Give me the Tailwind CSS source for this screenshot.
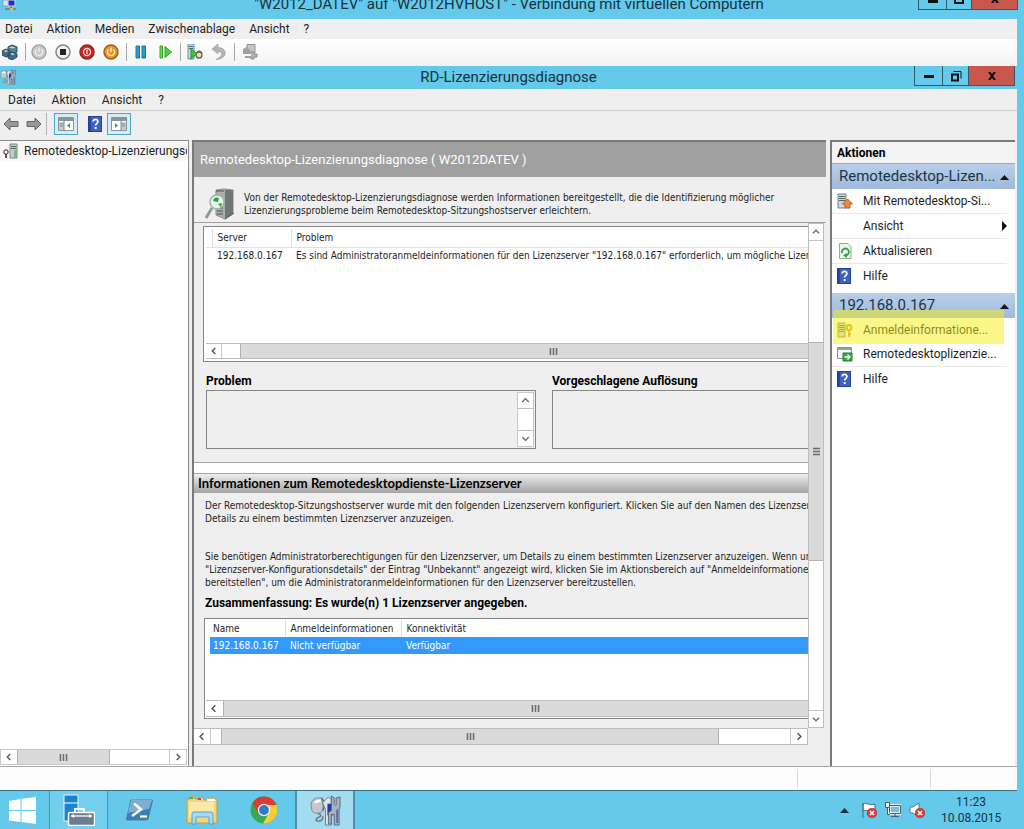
<!DOCTYPE html>
<html lang="de">
<head>
    <meta charset="UTF-8">
    <meta name="viewport" content="width=device-width, initial-scale=1.0">
    <title>RD-Lizenzierungsdiagnose</title>
    <script src="https://cdn.jsdelivr.net/npm/@tailwindcss/browser@4"></script>
</head>
<body class="flex flex-col h-screen overflow-hidden bg-[#64c9ea] text-[#1e1e1e] text-xs font-[Roboto,'Open_Sans',sans-serif]">

    <!-- Shared icons -->
    <svg class="hidden">
        <symbol id="chev-left" viewBox="0 0 16 16"><path d="M9.5 4.5L6 8l3.5 3.5" fill="none" stroke="#555" stroke-width="1.6"/></symbol>
        <symbol id="chev-right" viewBox="0 0 16 16"><path d="M6.5 4.5L10 8l-3.5 3.5" fill="none" stroke="#555" stroke-width="1.6"/></symbol>
        <symbol id="chev-up" viewBox="0 0 16 16"><path d="M4.5 9.5L8 6l3.5 3.5" fill="none" stroke="#666" stroke-width="1.5"/></symbol>
        <symbol id="chev-down" viewBox="0 0 16 16"><path d="M4.5 6.5L8 10l3.5-3.5" fill="none" stroke="#666" stroke-width="1.5"/></symbol>
        <symbol id="grip" viewBox="0 0 9 8"><path d="M1 0v8M4.5 0v8M8 0v8" stroke="#6a6a6a" stroke-width="1.7"/></symbol>
        <symbol id="help" viewBox="0 0 14 16">
            <rect x=".5" y=".5" width="13" height="15" fill="#3d62c4" stroke="#27408f"/>
            <path d="M1 1h2v14H1z" fill="#2a479c"/>
            <path d="M5.2 5.6c0-3 4.7-3 4.7-.2 0 2-2.3 2-2.3 4.2" fill="none" stroke="#fff" stroke-width="1.7"/>
            <rect x="6.7" y="11" width="1.9" height="2" fill="#fff"/>
        </symbol>
        <symbol id="tools" viewBox="0 0 32 32">
            <path d="M1 10c0-5 5-8 11-7l2 12c-2 5-10 5-12 1z" fill="#c3c9cc" stroke="#7d878d"/>
            <path d="M12 3c3 3 4 9 1 13" fill="none" stroke="#5f6a70" stroke-width="1.5"/>
            <path d="M5 8c2-2 4-2 6-2" stroke="#fff" stroke-width="2.5" fill="none"/>
            <path d="M8 19c4 1 4 3 1 4s-4 4 0 4c3 0 5-2 4-5" fill="none" stroke="#6e7a82" stroke-width="1.6"/>
            <path d="M13 8l6-6 3 3v26h-6V15z" fill="#dfe4e9" stroke="#727e88"/>
            <path d="M18 9h6v12h-6z" fill="#2335a8"/>
            <path d="M22 1l3 2v7l1 1 1-1V3l4-1v10l-1 3v16h-5V20h-3v10h-3V18l3-2z" fill="#a8b2bd" stroke="#596875"/>
            <path d="M28 15v14" stroke="#4c62ad" stroke-width="1.6"/>
        </symbol>
        <symbol id="close" viewBox="0 0 12 12"><path d="M2 2h2.5L6 4.3 7.5 2H10L7.3 6l2.7 4H7.5L6 7.7 4.5 10H2l2.7-4z" fill="#111"/></symbol>
        <symbol id="restore" viewBox="0 0 12 12"><path d="M2 4.5h6v6H2z" fill="none" stroke="#111" stroke-width="2"/><path d="M3.5 1.5H11v7" fill="none" stroke="#111"/></symbol>
        <symbol id="badge-x" viewBox="0 0 9 9"><circle cx="4.5" cy="4.5" r="4.3" fill="#d9423f" stroke="#a52222" stroke-width=".5"/><path d="M2.7 2.7l3.6 3.6M6.3 2.7L2.7 6.3" stroke="#fff" stroke-width="1.3"/></symbol>
    </svg>

    <!-- Virtual machine connection: title bar -->
    <header class="grid grid-cols-[1fr_auto_1fr] items-start h-[19px] shrink-0 pr-[6px]">
        <svg class="w-4 h-[10px] ml-0.5" viewBox="0 0 16 10">
            <path d="M1 0h5v6H1z" fill="#dce4ea" stroke="#7d8b96" stroke-width=".7"/><path d="M6 0h7v6H6z" fill="#1c2ed0" stroke="#d8e2ee"/>
            <path d="M9 6v2M3 9h11" stroke="#8c7a33" stroke-width="1.5"/><path d="M8 8h3v2H8z" fill="#d8c35a"/>
        </svg>
        <h1 class="text-[15px] leading-[8px] whitespace-nowrap text-[#17323c]">"W2012_DATEV" auf "W2012HVHOST" - Verbindung mit virtuellen Computern</h1>
        <div class="flex justify-self-end h-[10px] border border-t-0 border-[#315a68]">
            <button aria-label="Minimieren" class="w-7 flex justify-center border-r border-[#315a68]"><span class="w-[10px] h-[3px] bg-[#111]"></span></button>
            <button aria-label="Verkleinern" class="w-[25px] flex justify-center border-r border-[#315a68]"><span class="w-[10px] h-[4px] border-2 border-t-0 border-[#111]"></span></button>
            <button aria-label="Schließen" class="w-[45px] flex justify-center items-start overflow-hidden bg-[#c9574d]"><svg class="w-3 h-3 -mt-[7px]"><use href="#close"/></svg></button>
        </div>
    </header>

    <div class="flex flex-col flex-1 min-h-0 mr-[7px]">
        <nav class="flex items-center gap-[14px] h-5 shrink-0 pl-[5px] bg-[#efefef]">
            <button>Datei</button>
            <button>Aktion</button>
            <button>Medien</button>
            <button>Zwischenablage</button>
            <button>Ansicht</button>
            <button>?</button>
        </nav>

        <!-- Virtual machine toolbar -->
        <div class="flex items-center h-[27px] shrink-0 pl-0.5 pb-0.5 bg-linear-to-b from-white to-[#f3f3f3]">
            <button aria-label="Strg+Alt+Entf"><svg class="w-4 h-4" viewBox="0 0 16 16">
                <path d="M6 3l4-2 5 2v5l-4 2-5-2z" fill="#5b8196" stroke="#274a5d"/><path d="M0 7l4-2 4 2v4l-4 2-4-2zM6 10l4-2 5 2v3l-5 3-4-2z" fill="#426b82" stroke="#274a5d"/>
                <path d="M7 3.5l3-1 3 1-2 1zM2 7l2-1 2 1-2 1zM8 10l2-1 3 1-2 1z" fill="#c3e4f2"/>
            </svg></button>
            <span class="w-px h-[18px] ml-[7px] mr-[5px] bg-[#a9a9a9]"></span>
            <div class="flex gap-2">
                <button aria-label="Starten"><svg class="w-4 h-4" viewBox="0 0 16 16"><circle cx="8" cy="8" r="7" fill="#cacaca" stroke="#a6a6a6" stroke-width="1.5"/><path d="M5.5 5.5a3.5 3.5 0 1 0 5 0M8 3.5V8" fill="none" stroke="#efefef" stroke-width="1.3"/></svg></button>
                <button aria-label="Ausschalten"><svg class="w-4 h-4" viewBox="0 0 16 16"><circle cx="8" cy="8" r="7" fill="#f1f1f1" stroke="#858585" stroke-width="1.5"/><path d="M5 5h6v6H5z" fill="#222"/></svg></button>
                <button aria-label="Herunterfahren"><svg class="w-4 h-4" viewBox="0 0 16 16"><circle cx="8" cy="8" r="7" fill="#cf2421" stroke="#8d2b29" stroke-width="1.5"/><circle cx="8" cy="8" r="3.5" fill="none" stroke="#ffdcd9" stroke-width="1.3"/><path d="M8 6v4" stroke="#ffdcd9" stroke-width="1.3"/></svg></button>
                <button aria-label="Speichern"><svg class="w-4 h-4" viewBox="0 0 16 16"><circle cx="8" cy="8" r="7" fill="#e6941b" stroke="#9b6420" stroke-width="1.5"/><path d="M5.5 5.5a3.5 3.5 0 1 0 5 0M8 3.5V8" fill="none" stroke="#fff3d5" stroke-width="1.3"/></svg></button>
            </div>
            <span class="w-px h-[18px] ml-[7px] mr-2 bg-[#a9a9a9]"></span>
            <button aria-label="Anhalten"><svg class="w-[12px] h-[14px]" viewBox="0 0 12 14"><path d="M1 1h3.5v12H1zM7 1h3.5v12H7z" fill="#2f9bd6" stroke="#27709a"/></svg></button>
            <button aria-label="Zurücksetzen" class="ml-3"><svg class="w-[14px] h-[14px]" viewBox="0 0 14 14"><path d="M1 1h2.5v12H1z" fill="#71d55b" stroke="#37a42a"/><path d="M6 1.5l6.5 5.5L6 12.5z" fill="#52ce3c" stroke="#37a42a"/></svg></button>
            <span class="w-px h-[18px] ml-[7px] mr-[6px] bg-[#a9a9a9]"></span>
            <button aria-label="Prüfpunkt"><svg class="w-4 h-4" viewBox="0 0 16 16"><path d="M1 0h6v15H1z" fill="#c5d9e4" stroke="#6990a8"/><path d="M2 2.5h4M2 4.5h4" stroke="#3b718f"/><circle cx="12" cy="11" r="3" fill="#e7dcd4" stroke="#715b50" stroke-width="1.3"/><path d="M10 8c2-2 4-1 5 1" stroke="#444" fill="none"/><path d="M4 5l6 4.5L4 15z" fill="#3fc735" stroke="#2c922a"/></svg></button>
            <button aria-label="Wiederherstellen" class="ml-2"><svg class="w-4 h-4" viewBox="0 0 16 16"><path d="M1 5l6-5v3.5c10 0 10 11.5-2 12 7-3 7-8 2-8V10z" fill="#b5b5b5" stroke="#999" stroke-width=".6"/></svg></button>
            <span class="w-px h-[18px] mx-[7px] bg-[#a9a9a9]"></span>
            <button aria-label="Erweiterte Sitzung"><svg class="w-4 h-4" viewBox="0 0 16 16"><path d="M5 .5h8v8H5z" fill="#c4c4c4" stroke="#929292"/><path d="M1 5l4-2 3 3 1 4H1zM3 12h8v2H3z" fill="#a0a0a0"/><path d="M9 8h3v2h3v3h-3v2H9v-2" fill="#b2b2b2" stroke="#8d8d8d"/></svg></button>
        </div>

        <!-- Remote session: title bar -->
        <div class="grid grid-cols-[1fr_auto_1fr] h-[23px] shrink-0 bg-[#64c9ea]">
            <svg class="w-4 h-4 mt-[3px]"><use href="#tools"/></svg>
            <h2 class="text-[15px] leading-[22px] text-[#17323c]">RD-Lizenzierungsdiagnose</h2>
            <div class="flex justify-self-end h-5 mr-0.5 border border-t-0 border-[#315a68]">
                <button aria-label="Minimieren" class="w-7 flex justify-center pt-[9px] border-r border-[#315a68]"><span class="w-[10px] h-[3px] bg-[#111]"></span></button>
                <button aria-label="Verkleinern" class="w-[26px] flex justify-center items-center border-r border-[#315a68]"><svg class="w-3 h-3"><use href="#restore"/></svg></button>
                <button aria-label="Schließen" class="w-[45px] flex justify-center items-center bg-[#c9574d]"><svg class="w-3 h-3"><use href="#close"/></svg></button>
            </div>
        </div>
        <nav class="flex items-center gap-4 h-[22px] shrink-0 pl-2 bg-[#efefef] border-b border-[#d0d0d0]">
            <button>Datei</button>
            <button>Aktion</button>
            <button>Ansicht</button>
            <button>?</button>
        </nav>
        <div class="flex items-center h-[29px] shrink-0 pl-[3px] pb-1 bg-[#efefef]">
            <button aria-label="Zurück"><svg class="w-4 h-[14px]" viewBox="0 0 16 14"><path d="M1 7l6-6v3.5h8v5H7V13z" fill="#999" stroke="#666"/></svg></button>
            <button aria-label="Vorwärts" class="ml-[7px]"><svg class="w-4 h-[14px]" viewBox="0 0 16 14"><path d="M15 7L9 1v3.5H1v5h8V13z" fill="#999" stroke="#666"/></svg></button>
            <span class="w-px h-[22px] ml-1 mr-[7px] bg-[#b5b5b5]"></span>
            <button aria-label="Konsolenstruktur" class="flex items-center justify-center w-6 h-[22px] bg-[#d7edf6] border border-[#4ba9cf]"><svg class="w-4 h-[14px]" viewBox="0 0 16 14"><path d="M.5.5h15v13H.5z" fill="#fff" stroke="#8b9298"/><path d="M1 1h14v3H1z" fill="#8b9298"/><path d="M1 5h5v8H1z" fill="#c7cdd2"/><path d="M6 4v10M2 7h3M2 9h3" stroke="#7e868c"/><path d="M12 6v5L9 8.5z" fill="#36a92e"/></svg></button>
            <button aria-label="Hilfe" class="ml-[10px]"><svg class="w-[14px] h-4"><use href="#help"/></svg></button>
            <button aria-label="Aktionsbereich" class="flex items-center justify-center w-6 h-[22px] ml-[5px] bg-[#d7edf6] border border-[#4ba9cf]"><svg class="w-4 h-[14px]" viewBox="0 0 16 14"><path d="M.5.5h15v13H.5z" fill="#fff" stroke="#8b9298"/><path d="M1 1h14v3H1z" fill="#8b9298"/><path d="M10 5h5v8h-5z" fill="#c7cdd2"/><path d="M10 4v10M11 7h3M11 9h3" stroke="#7e868c"/><path d="M4 6v5l3-2.5z" fill="#36a92e"/></svg></button>
        </div>

        <main class="flex flex-1 min-h-0 bg-[#efefef] border-b border-[#a8a8a8]">
            <!-- Console tree -->
            <section class="flex flex-col w-[189px] shrink-0 bg-white border-t border-r border-[#8a8a8a]">
                <button class="flex items-center h-5 pl-[3px] mr-px text-left whitespace-nowrap overflow-hidden bg-[#f7f7f7]">
                    <svg class="w-[15px] h-4 shrink-0 mr-1.5" viewBox="0 0 15 16"><path d="M7 1h7v14H7z" fill="#c6ccce" stroke="#7b8488"/><path d="M8 3.5h5M8 5.5h5" stroke="#596368"/><path d="M11 7h3v8h-3z" fill="#86ad91"/><circle cx="3" cy="9" r="2.2" fill="#fff" stroke="#222"/><path d="M3 11v4" stroke="#222" stroke-width="1.5"/></svg>
                    <span>Remotedesktop-Lizenzierungsdiagnose</span>
                </button>
                <div class="flex h-4 mt-auto mb-px mr-px border border-[#c6c6c6]">
                    <button aria-label="Nach links" class="w-4"><svg class="w-4 h-[14px]"><use href="#chev-left"/></svg></button>
                    <div class="flex items-center justify-center w-[93px] bg-[#dadada] border-x border-[#b2b2b2]"><svg class="w-[9px] h-[7px]"><use href="#grip"/></svg></div>
                    <button aria-label="Nach rechts" class="w-[17px] ml-auto border-l border-[#c6c6c6]"><svg class="w-4 h-[14px]"><use href="#chev-right"/></svg></button>
                </div>
            </section>

            <!-- Diagnosis details -->
            <section class="flex flex-col flex-1 min-w-0 ml-[3px] border-l-2 border-t-2 border-[#7a7a7a]">
                <h3 class="h-[35px] shrink-0 pl-1.5 leading-9 text-[13px] text-white bg-[#a0a0a0]">Remotedesktop-Lizenzierungsdiagnose ( W2012DATEV )</h3>
                <div class="flex items-center h-[46px] shrink-0 pt-2 pl-[11px] border-b border-[#a0a0a0] font-['DejaVu_Sans_Condensed','Liberation_Sans',sans-serif] text-[10px] leading-[13px]">
                    <svg class="w-[30px] h-8 mr-[9px] shrink-0" viewBox="0 0 30 32">
                        <path d="M11 2l8-1 9 1v24l-8 5-9-4z" fill="#a9b0ae" stroke="#858b8b"/><path d="M20 2h8v24l-8 5z" fill="#6f7775"/><path d="M11 3h8M12 20h6M12 23h6M12 26h6" stroke="#4c5551"/>
                        <path d="M7 20L1 30" stroke="#8e9a9c" stroke-width="3"/><circle cx="12" cy="14" r="7" fill="#e8f5ea" stroke="#a4b0ac" stroke-width="1.5"/><path d="M8 13a4 4 0 0 1 6-3l-1 4zM13 16l4-1-1 4z" fill="#2e9e40"/>
                        <path d="M20 31l9-6" stroke="#505050" stroke-dasharray="2 1"/>
                    </svg>
                    <p class="whitespace-nowrap">Von der Remotedesktop-Lizenzierungsdiagnose werden Informationen bereitgestellt, die die Identifizierung möglicher<br>Lizenzierungsprobleme beim Remotedesktop-Sitzungshostserver erleichtern.</p>
                </div>

                <div class="flex mr-[2px] h-[505px] shrink-0 font-['DejaVu_Sans_Condensed','Liberation_Sans',sans-serif] text-[10px] leading-[13px]">
                    <div class="flex-1 min-w-0 overflow-hidden">
                        <div class="w-[740px] pt-[3px]">
                            <!-- Problem list -->
                            <div class="flex flex-col h-[136px] ml-[9px] p-0.5 bg-white border border-[#858585]">
                                <table class="w-full table-fixed text-left whitespace-nowrap">
                                    <thead>
                                        <tr class="h-[18px] border-b border-[#e2e2e2]">
                                            <th class="w-[6px]"></th>
                                            <th class="w-[79px] pl-[5px] font-normal border-x border-[#dedede]">Server</th>
                                            <th class="pl-[5px] font-normal">Problem</th>
                                        </tr>
                                    </thead>
                                    <tbody>
                                        <tr class="h-[17px]">
                                            <td></td>
                                            <td class="pl-[5px]">192.168.0.167</td>
                                            <td class="pl-[5px]">Es sind Administratoranmeldeinformationen für den Lizenzserver "192.168.0.167" erforderlich, um mögliche Lizenzierungsprobleme</td>
                                        </tr>
                                    </tbody>
                                </table>
                                <div class="flex h-4 mt-auto bg-white border-y border-[#bdbdbd]">
                                    <button aria-label="Nach links" class="w-4 border-r border-[#c6c6c6]"><svg class="w-4 h-[14px]"><use href="#chev-left"/></svg></button>
                                    <div class="flex items-center justify-center w-[626px] ml-[18px] bg-[#dadada] border-x border-[#b2b2b2]"><svg class="w-[9px] h-[7px]"><use href="#grip"/></svg></div>
                                </div>
                            </div>

                            <!-- Selected problem -->
                            <div class="flex gap-4 h-[100px] pt-[11px] pl-3">
                                <div>
                                    <label for="problem" class="block h-[17px] leading-4 font-[Roboto,sans-serif] text-xs font-bold text-black">Problem</label>
                                    <div class="flex w-[330px] h-[59px] p-px border border-[#858585]">
                                        <textarea id="problem" readonly class="flex-1 resize-none bg-transparent outline-none overflow-hidden"></textarea>
                                        <div class="flex flex-col w-[17px] bg-white border border-[#c9c9c9]">
                                            <button aria-label="Nach oben" class="h-4 border-b border-[#c0c0c0]"><svg class="w-[15px] h-[15px]"><use href="#chev-up"/></svg></button>
                                            <button aria-label="Nach unten" class="h-4 mt-auto border-t border-[#c0c0c0]"><svg class="w-[15px] h-[15px]"><use href="#chev-down"/></svg></button>
                                        </div>
                                    </div>
                                </div>
                                <div>
                                    <label for="solution" class="block h-[17px] leading-4 font-[Roboto,sans-serif] text-xs font-bold text-black">Vorgeschlagene Auflösung</label>
                                    <textarea id="solution" readonly class="block w-[330px] h-[59px] resize-none border border-[#858585] outline-none"></textarea>
                                </div>
                            </div>

                            <!-- License server information -->
                            <div class="h-3 bg-white border-y border-[#a8a8a8]"></div>
                            <h4 class="h-[19px] pl-1 leading-[19px] font-[Lato,sans-serif] [font-variant-ligatures:none] text-[13px] font-bold text-black bg-linear-to-b from-[#efefef] to-[#a3a3a3]">Informationen zum Remotedesktopdienste-Lizenzserver</h4>
                            <div class="pl-[11px] pt-[6px] whitespace-nowrap">
                                <p>Der Remotedesktop-Sitzungshostserver wurde mit den folgenden Lizenzservern konfiguriert. Klicken Sie auf den Namen des Lizenzservers, um<br>Details zu einem bestimmten Lizenzserver anzuzeigen.</p>
                                <p class="mt-[25px]">Sie benötigen Administratorberechtigungen für den Lizenzserver, um Details zu einem bestimmten Lizenzserver anzuzeigen. Wenn unter<br>"Lizenzserver-Konfigurationsdetails" der Eintrag "Unbekannt" angezeigt wird, klicken Sie im Aktionsbereich auf "Anmeldeinformationen<br>bereitstellen", um die Administratoranmeldeinformationen für den Lizenzserver bereitzustellen.</p>
                                <p class="mt-2 font-[Roboto,sans-serif] text-xs leading-[13px] font-bold text-black">Zusammenfassung: Es wurde(n) 1 Lizenzserver angegeben.</p>
                            </div>
                            <div class="flex flex-col h-[101px] mt-2 ml-[10px] p-px bg-white border border-[#858585]">
                                <table class="w-full table-fixed text-left whitespace-nowrap">
                                    <thead>
                                        <tr class="h-[17px]">
                                            <th class="w-[77px] pl-[5px] font-normal border-r border-[#dedede]">Name</th>
                                            <th class="w-[116px] pl-[5px] font-normal border-r border-[#dedede]">Anmeldeinformationen</th>
                                            <th class="pl-[5px] font-normal">Konnektivität</th>
                                        </tr>
                                    </thead>
                                    <tbody>
                                        <tr class="h-[17px] text-white bg-[#3399ff]">
                                            <td class="pl-[3px] border-l-4 border-white">192.168.0.167</td>
                                            <td class="pl-[5px]">Nicht verfügbar</td>
                                            <td class="pl-[5px]">Verfügbar</td>
                                        </tr>
                                    </tbody>
                                </table>
                                <div class="flex h-[17px] mt-auto bg-white border-y border-[#bdbdbd]">
                                    <button aria-label="Nach links" class="w-[17px]"><svg class="w-4 h-[15px]"><use href="#chev-left"/></svg></button>
                                    <div class="flex items-center justify-center w-[624px] bg-[#dadada] border-x border-[#b2b2b2]"><svg class="w-[9px] h-[7px]"><use href="#grip"/></svg></div>
                                </div>
                            </div>
                        </div>
                    </div>
                    <div class="flex flex-col w-4 shrink-0 bg-white border border-[#bdbdbd]">
                        <button aria-label="Nach oben" class="h-[17px] border-b border-[#c6c6c6]"><svg class="w-[14px] h-4"><use href="#chev-up"/></svg></button>
                        <div class="flex items-center justify-center h-[219px] mt-[101px] bg-[#dadada] border-y border-[#b2b2b2]"><svg class="w-[9px] h-[7px] rotate-90"><use href="#grip"/></svg></div>
                        <button aria-label="Nach unten" class="h-[17px] mt-auto border-t border-[#c6c6c6]"><svg class="w-[14px] h-4"><use href="#chev-down"/></svg></button>
                    </div>
                </div>
                <div class="flex h-[17px] shrink-0 mr-[18px] bg-white border border-l-0 border-[#bdbdbd]">
                    <button aria-label="Nach links" class="w-[17px] border-r border-[#c6c6c6]"><svg class="w-4 h-[15px]"><use href="#chev-left"/></svg></button>
                    <div class="flex items-center justify-center w-[498px] ml-[10px] bg-[#dadada] border-x border-[#b2b2b2]"><svg class="w-[9px] h-[7px]"><use href="#grip"/></svg></div>
                    <button aria-label="Nach rechts" class="w-[17px] ml-auto border-l border-[#c6c6c6]"><svg class="w-4 h-[15px]"><use href="#chev-right"/></svg></button>
                </div>
            </section>

            <!-- Actions -->
            <aside class="w-[185px] shrink-0 ml-1 mr-0.5 border-l-2 border-t-2 border-[#7a7a7a] bg-white">
                <h3 class="h-[22px] pl-[5px] leading-[22px] font-bold text-black bg-[#f3f3f3] border-b border-[#a8a8a8]">Aktionen</h3>
                <button class="flex items-center justify-between w-full h-[25px] pt-px pl-[7px] pr-1.5 text-[15px] whitespace-nowrap text-[#1c3448] bg-linear-to-b from-[#b9cfe9] to-[#9dbadb]">
                    <span>Remotedesktop-Lizen...</span>
                    <svg class="w-[9px] h-[5px] shrink-0" viewBox="0 0 9 5"><path d="M0 5l4.5-5L9 5z" fill="#111"/></svg>
                </button>
                <ul class="pb-[5px] mr-2">
                    <li class="border-b border-[#e8e8e8]"><button class="flex items-center w-full h-6 pl-[5px]"><svg class="w-4 h-4 mr-[10px]" viewBox="0 0 16 16"><path d="M1 1h8v14H1z" fill="#cfd4d6" stroke="#7b8488"/><path d="M2 3.5h6M2 5.5h6M2 7.5h6" stroke="#596368"/><path d="M10.5 6l5 5h-2.5v4H8v-4H5.5z" fill="#f4883a" stroke="#c85718"/></svg>Mit Remotedesktop-Si...</button></li>
                    <li class="border-b border-[#e8e8e8]"><button class="flex items-center justify-between w-full h-6 pl-[31px]">Ansicht<svg class="w-[5px] h-[10px]" viewBox="0 0 5 10"><path d="M0 0l5 5-5 5z" fill="#111"/></svg></button></li>
                    <li class="border-b border-[#e8e8e8]"><button class="flex items-center w-full h-6 pl-[5px]"><svg class="w-4 h-4 mr-[10px]" viewBox="0 0 16 16"><path d="M2.5.5H11l3 3v12H2.5z" fill="#edf7ed" stroke="#92ad94"/><path d="M5 10a3.5 3.5 0 1 1 3.5 2.5" fill="none" stroke="#38a343" stroke-width="1.8"/><path d="M10 10v5l-4-2.5z" fill="#38a343"/></svg>Aktualisieren</button></li>
                    <li><button class="flex items-center w-full h-6 pl-[5px]"><svg class="w-[14px] h-4 mr-3"><use href="#help"/></svg>Hilfe</button></li>
                </ul>
                <div class="relative">
                    <button class="flex items-center justify-between w-full h-[25px] pt-px pl-[7px] pr-1.5 text-[15px] text-[#1c3448] bg-linear-to-b from-[#b9cfe9] to-[#9dbadb]">
                        <span>192.168.0.167</span>
                        <svg class="w-[9px] h-[5px]" viewBox="0 0 9 5"><path d="M0 5l4.5-5L9 5z" fill="#111"/></svg>
                    </button>
                    <ul class="mr-2">
                        <li><button class="flex items-center w-full h-6 pl-[5px]"><svg class="w-4 h-4 mr-[10px]" viewBox="0 0 16 16"><path d="M1 1h7v14H1z" fill="#cfd4d6" stroke="#7b8488"/><path d="M2 3.5h5M2 5.5h5M2 7.5h5M2 9.5h5" stroke="#596368"/><circle cx="12" cy="5.5" r="2.5" fill="none" stroke="#dd9425" stroke-width="2"/><path d="M12 8v7M12 12h2" stroke="#dd9425" stroke-width="1.8"/></svg>Anmeldeinformatione...</button></li>
                        <li class="border-b border-[#e8e8e8]"><button class="flex items-center w-full h-6 pl-[5px]"><svg class="w-4 h-4 mr-[10px]" viewBox="0 0 16 16"><path d="M.5 1.5h14v11H.5z" fill="#f5f8f8" stroke="#80968e"/><path d="M1 2h13v2H1z" fill="#8ba69b"/><path d="M6 7h9v8H6z" fill="#39a647" stroke="#247c30"/><path d="M7.5 11h5M10.5 8.5l2.5 2.5-2.5 2.5" fill="none" stroke="#fff" stroke-width="1.3"/></svg>Remotedesktoplizenzie...</button></li>
                        <li><button class="flex items-center w-full h-6 pl-[5px]"><svg class="w-[14px] h-4 mr-3"><use href="#help"/></svg>Hilfe</button></li>
                    </ul>
                    <!-- Marker over the credentials action -->
                    <div class="absolute left-px right-[11px] top-[17px] h-[34px] bg-[#f8f014]/50 pointer-events-none"></div>
                </div>
            </aside>
        </main>

        <!-- Status bar -->
        <div class="flex justify-end h-[23px] shrink-0 bg-[#fdfdfd]">
            <div class="w-[133px] my-0.5 border-l border-[#dcdcdc]"></div>
            <div class="w-[87px] my-0.5 border-l border-[#dcdcdc]"></div>
        </div>

        <!-- Taskbar -->
        <footer class="flex h-[39px] shrink-0 border-t border-[#3d7184] bg-[#64c9ea]">
            <button aria-label="Start" class="flex items-center justify-center w-[49px] pr-1"><svg class="w-[27px] h-[27px]" viewBox="0 0 27 27"><path d="M0 4l11.5-2v11H0zM12.5 1.8L27 0v13H12.5zM0 14h11.5v11L0 23.5zM12.5 14H27v13l-14.5-1.9z" fill="#fff"/></svg></button>
            <button aria-label="Server-Manager" class="flex items-center justify-center w-[59px] bg-[#74cfec] border-x border-[#4199b7]"><svg class="w-8 h-8" viewBox="0 0 32 32"><path d="M1 1h14v26H1z" fill="#1783d2" stroke="#eaf7fd"/><path d="M1 9h14" stroke="#fff"/><path d="M12 18v-3h9v3" fill="none" stroke="#fff" stroke-width="2"/><rect x="5.5" y="18.5" width="26" height="13" rx="1" fill="#6d7d90" stroke="#fff" stroke-width="1.4"/><path d="M8 22h21" stroke="#fff" stroke-width="1.3"/><path d="M8 22l3-2v4zM29 22l-3-2v4z" fill="#fff"/></svg></button>
            <button aria-label="PowerShell" class="flex items-center justify-center w-[63px]"><svg class="w-[29px] h-6" viewBox="0 0 29 24"><path d="M6 1h21q2 0 1.5 2L24 21q-.5 2-2 2H2q-2 0-1.5-2L4.5 3Q5 1 6 1z" fill="#387fb3" stroke="#8bc2e0"/><path d="M6 2h21l-3 9L3 15z" fill="#78afd3"/><path d="M9 5.5l7 6-9 6.5" fill="none" stroke="#fff" stroke-width="2.6"/><path d="M15 18.5h7" stroke="#fff" stroke-width="2.2"/></svg></button>
            <button aria-label="Explorer" class="flex items-center justify-center w-[62px]"><svg class="w-8 h-[30px]" viewBox="0 0 32 30"><path d="M1 4h3V1h4l1 3h4V2h4l1 3h4V3h7l2 3v22H1z" fill="#eed57e" stroke="#c29d45"/><path d="M4 2h3v2H4z" fill="#42a848"/><path d="M12 3h3v2h-3z" fill="#c94444"/><path d="M21 4h8v2h-8z" fill="#fff"/><path d="M3 7h25v16H3z" fill="#fae9a6"/><path d="M6 29V19q0-2 2-2h17q2 0 2 2v10h-4v-7H10v7z" fill="#a2dbf3" stroke="#5b9fc8"/></svg></button>
            <button aria-label="Chrome" class="flex items-center justify-center w-[62px]"><svg class="w-7 h-7" viewBox="0 0 28 28"><circle cx="14" cy="14" r="13.5" fill="#38a852"/><path d="M2.3 7.3A13.5 13.5 0 0 1 25.7 7.3L26.5 9H14L8.5 17z" fill="#da3b30"/><path d="M26.5 9A13.5 13.5 0 0 1 13 27.5L19.5 16 18 9z" fill="#f8ce37"/><circle cx="14" cy="14" r="6.2" fill="#f4f4f4"/><circle cx="14" cy="14" r="4.9" fill="#3479ca"/></svg></button>
            <button aria-label="RD-Lizenzierungsdiagnose" class="flex items-center justify-center w-[60px] bg-[#a3dcf0] border-x-2 border-[#4b90a8]"><svg class="w-[31px] h-[31px]"><use href="#tools"/></svg></button>

            <div class="flex items-center gap-2 ml-auto mr-4">
                <svg class="w-[9px] h-[5px] mr-1" viewBox="0 0 9 5"><path d="M0 5l4.5-5L9 5z" fill="#16333d"/></svg>
                <svg class="w-4 h-4" viewBox="0 0 16 16"><path d="M2 1v15M2 2c4-2 5 2 12 0v7c-6 2-8-2-12 0z" fill="#fff" stroke="#4c6975"/><use href="#badge-x" x="6" y="6" width="10" height="10"/></svg>
                <svg class="w-4 h-4" viewBox="0 0 16 16"><path d="M4.5 3.5h11v8h-11z" fill="#79bdd7" stroke="#fff" stroke-width="2.5"/><path d="M4.5 3.5h11v8h-11zM6 14.5h8M10 12v2.5" fill="none" stroke="#3d6170"/><path d="M.5.5h4v5h-4zM2.5 5.5v7H5" fill="#fff" stroke="#3d6170"/></svg>
                <svg class="w-4 h-4" viewBox="0 0 16 16"><path d="M1 5h3l6-4v14l-6-4H1z" fill="#fff" stroke="#5d7884"/><use href="#badge-x" x="6" y="6" width="10" height="10"/></svg>
                <div class="w-[60px] ml-2 text-center text-xs leading-4 text-[#16333d]"><time class="block">11:23</time><time class="block">10.08.2015</time></div>
            </div>
        </footer>
    </div>
</body>
</html>
